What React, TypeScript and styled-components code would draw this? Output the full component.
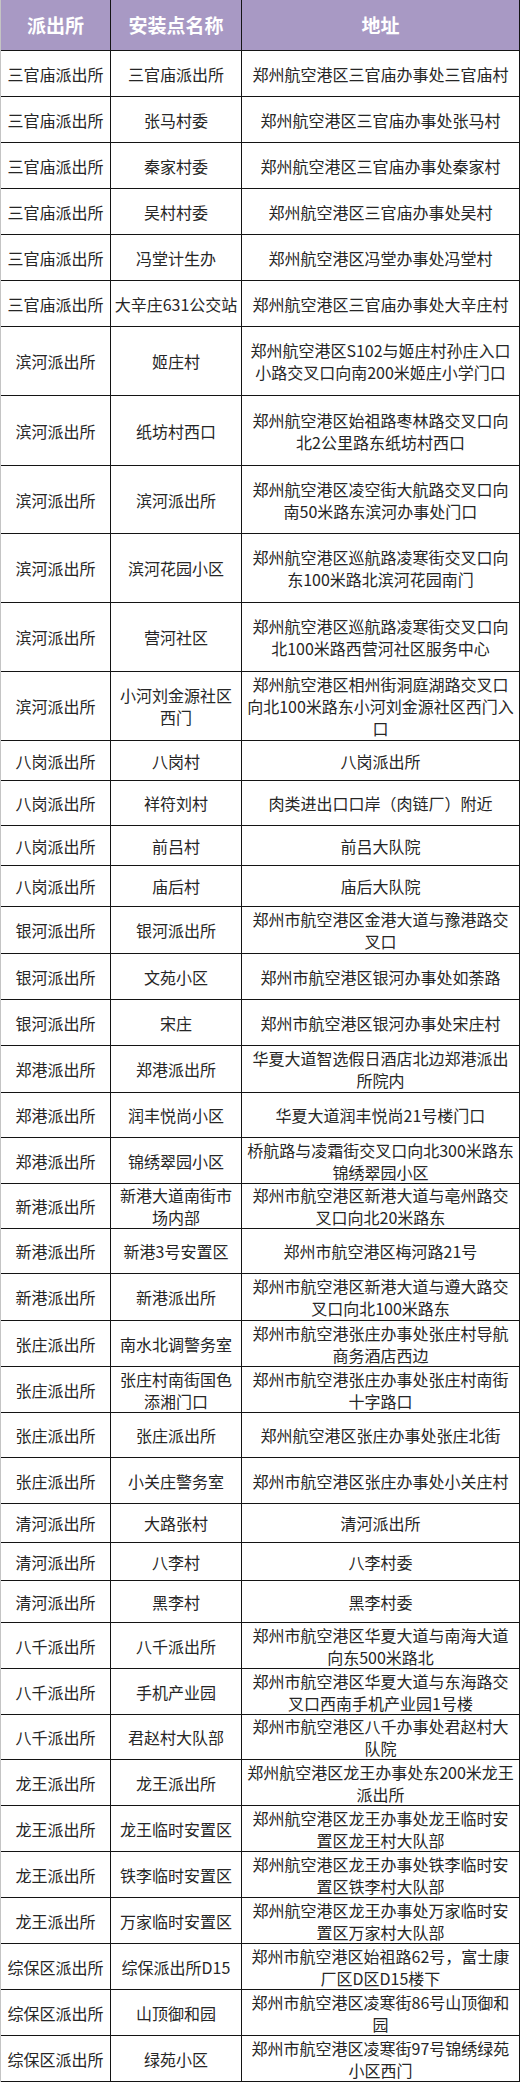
import styled, { createGlobalStyle } from 'styled-components';

interface RowData {
  station: string;
  site: string;
  address: string;
  height: number;
}

const GlobalStyle = createGlobalStyle`
  body {
    margin: 0;
    background: #ffffff;
    font-family: "Noto Sans CJK SC", "Noto Sans", sans-serif;
  }
`;

const Table = styled.div`
  width: 520px;
  box-sizing: border-box;
  border-left: 1px solid #c4c4c4;
  color: #262626;
`;

const Row = styled.div<{ $h: number; $head?: boolean }>`
  display: grid;
  grid-template-columns: 110px 131px 1fr;
  height: ${(p) => p.$h}px;
  box-sizing: border-box;
  border-bottom: 1px solid #141414;
  background: ${(p) => (p.$head ? '#a899c4' : '#ffffff')};
`;

const Cell = styled.div<{ $head?: boolean }>`
  display: flex;
  align-items: center;
  justify-content: center;
  text-align: center;
  box-sizing: border-box;
  border-right: 1px solid #141414;
  padding: 0 2px;
  white-space: pre;
  font-size: ${(p) => (p.$head ? '19px' : '16px')};
  font-weight: ${(p) => (p.$head ? 700 : 400)};
  color: ${(p) => (p.$head ? '#ffffff' : '#262626')};
  line-height: 22px;
`;

const rows: RowData[] = [
  { station: '三官庙派出所', site: '三官庙派出所', address: '郑州航空港区三官庙办事处三官庙村', height: 46 },
  { station: '三官庙派出所', site: '张马村委', address: '郑州航空港区三官庙办事处张马村', height: 46 },
  { station: '三官庙派出所', site: '秦家村委', address: '郑州航空港区三官庙办事处秦家村', height: 46 },
  { station: '三官庙派出所', site: '吴村村委', address: '郑州航空港区三官庙办事处吴村', height: 46 },
  { station: '三官庙派出所', site: '冯堂计生办', address: '郑州航空港区冯堂办事处冯堂村', height: 46 },
  { station: '三官庙派出所', site: '大辛庄631公交站', address: '郑州航空港区三官庙办事处大辛庄村', height: 46 },
  { station: '滨河派出所', site: '姬庄村', address: '郑州航空港区S102与姬庄村孙庄入口\n小路交叉口向南200米姬庄小学门口', height: 69 },
  { station: '滨河派出所', site: '纸坊村西口', address: '郑州航空港区始祖路枣林路交叉口向\n北2公里路东纸坊村西口', height: 70 },
  { station: '滨河派出所', site: '滨河派出所', address: '郑州航空港区凌空街大航路交叉口向\n南50米路东滨河办事处门口', height: 68 },
  { station: '滨河派出所', site: '滨河花园小区', address: '郑州航空港区巡航路凌寒街交叉口向\n东100米路北滨河花园南门', height: 69 },
  { station: '滨河派出所', site: '营河社区', address: '郑州航空港区巡航路凌寒街交叉口向\n北100米路西营河社区服务中心', height: 69 },
  { station: '滨河派出所', site: '小河刘金源社区\n西门', address: '郑州航空港区相州街洞庭湖路交叉口\n向北100米路东小河刘金源社区西门入\n口', height: 69 },
  { station: '八岗派出所', site: '八岗村', address: '八岗派出所', height: 40 },
  { station: '八岗派出所', site: '祥符刘村', address: '肉类进出口口岸（肉链厂）附近', height: 45 },
  { station: '八岗派出所', site: '前吕村', address: '前吕大队院', height: 40 },
  { station: '八岗派出所', site: '庙后村', address: '庙后大队院', height: 41 },
  { station: '银河派出所', site: '银河派出所', address: '郑州市航空港区金港大道与豫港路交\n叉口', height: 47 },
  { station: '银河派出所', site: '文苑小区', address: '郑州市航空港区银河办事处如荼路', height: 46 },
  { station: '银河派出所', site: '宋庄', address: '郑州市航空港区银河办事处宋庄村', height: 46 },
  { station: '郑港派出所', site: '郑港派出所', address: '华夏大道智选假日酒店北边郑港派出\n所院内', height: 47 },
  { station: '郑港派出所', site: '润丰悦尚小区', address: '华夏大道润丰悦尚21号楼门口', height: 45 },
  { station: '郑港派出所', site: '锦绣翠园小区', address: '桥航路与凌霜街交叉口向北300米路东\n锦绣翠园小区', height: 46 },
  { station: '新港派出所', site: '新港大道南街市\n场内部', address: '郑州市航空港区新港大道与亳州路交\n叉口向北20米路东', height: 45 },
  { station: '新港派出所', site: '新港3号安置区', address: '郑州市航空港区梅河路21号', height: 45 },
  { station: '新港派出所', site: '新港派出所', address: '郑州市航空港区新港大道与遵大路交\n叉口向北100米路东', height: 47 },
  { station: '张庄派出所', site: '南水北调警务室', address: '郑州市航空港张庄办事处张庄村导航\n商务酒店西边', height: 46 },
  { station: '张庄派出所', site: '张庄村南街国色\n添湘门口', address: '郑州市航空港张庄办事处张庄村南街\n十字路口', height: 46 },
  { station: '张庄派出所', site: '张庄派出所', address: '郑州航空港区张庄办事处张庄北街', height: 45 },
  { station: '张庄派出所', site: '小关庄警务室', address: '郑州市航空港区张庄办事处小关庄村', height: 46 },
  { station: '清河派出所', site: '大路张村', address: '清河派出所', height: 39 },
  { station: '清河派出所', site: '八李村', address: '八李村委', height: 38 },
  { station: '清河派出所', site: '黑李村', address: '黑李村委', height: 42 },
  { station: '八千派出所', site: '八千派出所', address: '郑州市航空港区华夏大道与南海大道\n向东500米路北', height: 46 },
  { station: '八千派出所', site: '手机产业园', address: '郑州市航空港区华夏大道与东海路交\n叉口西南手机产业园1号楼', height: 46 },
  { station: '八千派出所', site: '君赵村大队部', address: '郑州市航空港区八千办事处君赵村大\n队院', height: 45 },
  { station: '龙王派出所', site: '龙王派出所', address: '郑州航空港区龙王办事处东200米龙王\n派出所', height: 46 },
  { station: '龙王派出所', site: '龙王临时安置区', address: '郑州航空港区龙王办事处龙王临时安\n置区龙王村大队部', height: 46 },
  { station: '龙王派出所', site: '铁李临时安置区', address: '郑州航空港区龙王办事处铁李临时安\n置区铁李村大队部', height: 46 },
  { station: '龙王派出所', site: '万家临时安置区', address: '郑州航空港区龙王办事处万家临时安\n置区万家村大队部', height: 46 },
  { station: '综保区派出所', site: '综保派出所D15', address: '郑州市航空港区始祖路62号，富士康\n厂区D区D15楼下', height: 46 },
  { station: '综保区派出所', site: '山顶御和园', address: '郑州市航空港区凌寒街86号山顶御和\n园', height: 46 },
  { station: '综保区派出所', site: '绿苑小区', address: '郑州市航空港区凌寒街97号锦绣绿苑\n小区西门', height: 46 },
];

export default function App() {
  return (
    <>
      <GlobalStyle />
      <Table>
        <Row $h={51} $head>
          <Cell $head>派出所</Cell>
          <Cell $head>安装点名称</Cell>
          <Cell $head>地址</Cell>
        </Row>
        {rows.map((r, i) => (
          <Row key={i} $h={r.height}>
            <Cell>{r.station}</Cell>
            <Cell>{r.site}</Cell>
            <Cell>{r.address}</Cell>
          </Row>
        ))}
      </Table>
    </>
  );
}
